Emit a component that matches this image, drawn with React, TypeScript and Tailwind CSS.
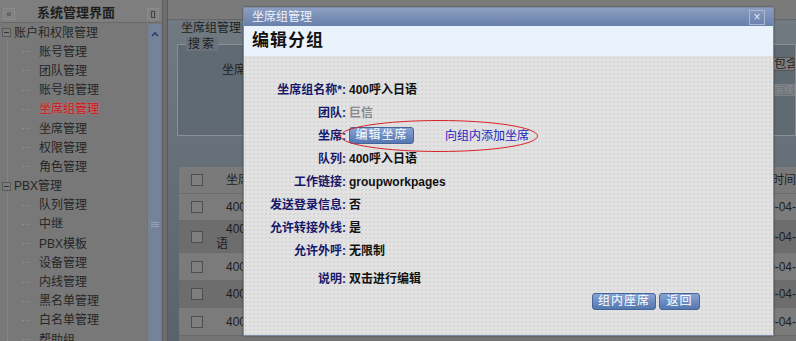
import React from 'react';

const font = "font-['Liberation_Sans','Noto_Sans_CJK_SC',sans-serif]";

type TreeItem = { label: string; top?: boolean; active?: boolean };

const tree: TreeItem[] = [
  { label: '账户和权限管理', top: true },
  { label: '账号管理' },
  { label: '团队管理' },
  { label: '账号组管理' },
  { label: '坐席组管理', active: true },
  { label: '坐席管理' },
  { label: '权限管理' },
  { label: '角色管理' },
  { label: 'PBX管理', top: true },
  { label: '队列管理' },
  { label: '中继' },
  { label: 'PBX模板' },
  { label: '设备管理' },
  { label: '内线管理' },
  { label: '黑名单管理' },
  { label: '白名单管理' },
  { label: '帮助组' },
];

const formRows: { label: string; value?: string; muted?: boolean; seat?: boolean }[] = [
  { label: '坐席组名称*:', value: '400呼入日语' },
  { label: '团队:', value: '巨信', muted: true },
  { label: '坐席:', seat: true },
  { label: '队列:', value: '400呼入日语' },
  { label: '工作链接:', value: 'groupworkpages' },
  { label: '发送登录信息:', value: '否' },
  { label: '允许转接外线:', value: '是' },
  { label: '允许外呼:', value: '无限制' },
];

function Sidebar() {
  return (
    <div className="w-[163px] shrink-0 bg-[#787878] border-r border-[#5e5e5e] flex flex-col">
      {/* header */}
      <div className="h-[23px] shrink-0 flex items-end pb-[2px] px-[3px] bg-[#7e7e7e] border-b border-[#6a6a6a]">
        <div className="w-[12px] h-[12px] border border-[#8c8c8c] bg-[#828282] text-[9px] leading-[10px] text-[#3a3a3a] text-center">«</div>
        <div className="flex-1 text-center text-[13px] font-bold text-[#1e1e1e] leading-[14px] pr-[10px]">系统管理界面</div>
        <div className="w-[12px] h-[12px] border border-[#8c8c8c] bg-[#828282] flex items-center justify-center">
          <div className="w-[4px] h-[7px] border border-[#444]" />
        </div>
      </div>
      <div className="flex-1 flex min-h-0">
        {/* tree */}
        <div className="flex-1 relative">
          <div className="absolute left-[7px] top-[10px] bottom-0 border-l border-dotted border-[#8e8e8e]" />
          {tree.map((t) => (
            <div key={t.label} className="h-[19.2px] flex items-center relative">
              {t.top ? (
                <>
                  <div className="w-[9px] h-[9px] ml-[2px] border border-[#5a5a5a] bg-[#7c7c7c] flex items-center justify-center relative z-10">
                    <div className="w-[5px] h-px bg-[#333]" />
                  </div>
                  <span className="ml-[3px] text-[12px] text-[#262626] whitespace-nowrap">{t.label}</span>
                </>
              ) : (
                <>
                  <div className="ml-[22px] w-[8px] border-t border-dotted border-[#8e8e8e]" />
                  <span
                    className={`ml-[9px] text-[12px] whitespace-nowrap ${
                      t.active ? 'text-[#c8141c] [text-shadow:0_0_2px_#e08080]' : 'text-[#262626]'
                    }`}
                  >
                    {t.label}
                  </span>
                </>
              )}
            </div>
          ))}
        </div>
        {/* scrollbar */}
        <div className="w-[14px] shrink-0 mr-[1px] mt-[1px] bg-[#76819a] border-l border-[#6c7487] flex flex-col items-center">
          <svg width="10" height="10" viewBox="0 0 10 10" className="mt-[5px]">
            <path d="M2 7 L5 4 L8 7" stroke="#2b3e6e" strokeWidth="1.6" fill="none" />
          </svg>
          <div className="mt-[183px] flex flex-col gap-[1px]">
            <div className="w-[8px] h-px bg-[#9aa3b6]" />
            <div className="w-[8px] h-px bg-[#9aa3b6]" />
            <div className="w-[8px] h-px bg-[#9aa3b6]" />
          </div>
        </div>
      </div>
    </div>
  );
}

function Checkbox() {
  return <div className="w-[12px] h-[12px] border border-[#4e4e4e] bg-[#7e7e7e]" />;
}

function Main() {
  const rows = [
    { bg: 'bg-[#7b7b7b]', h: 'h-[27px]', two: false },
    { bg: 'bg-[#6d6d6d]', h: 'h-[32px]', two: true },
    { bg: 'bg-[#7b7b7b]', h: 'h-[28px]', two: false },
    { bg: 'bg-[#6d6d6d]', h: 'h-[27px]', two: false },
    { bg: 'bg-[#7b7b7b]', h: 'h-[28px]', two: false },
  ];
  return (
    <div className="flex-1 ml-[4px] border-l border-[#5a5a5a] bg-gradient-to-b from-[#737b82] to-[#58636c] flex flex-col">
      <div className="h-[20px] shrink-0 bg-[#7a7a7a] border-b border-[#666]" />
      <div className="h-[16px] flex items-center pl-[13px] text-[12px] text-[#1e1e1e]">坐席组管理</div>
      {/* search fieldset */}
      <div className="ml-[9px] mt-[8px] h-[92px] border border-[#8a9096] relative bg-[#5f6a73]">
        <span className="absolute -top-[8px] left-[8px] px-[2px] bg-[#6a737b] text-[12px] leading-[14px] text-[#1e1e1e] tracking-[2px]">搜索</span>
        <div className="pl-[44px] pt-[16px] text-[12px] text-[#1e1e1e]">坐席</div>
        <div className="absolute right-[0px] top-[12px] flex flex-col items-end gap-[13px]">
          <div className="w-[22px] h-[14px] bg-[#7e7e7e] border border-[#555] text-[12px] leading-[12px] text-[#1e1e1e] overflow-hidden whitespace-nowrap">包含</div>
          <div className="w-[22px] h-[12px] bg-[#6f7479] border border-[#7c8186] text-[10px] leading-[10px] text-[#8c9095] overflow-hidden whitespace-nowrap">层级</div>
        </div>
      </div>
      {/* table */}
      <div className="ml-[11px] mt-[31px] flex-1 bg-[#747474]">
        <div className="h-[27px] flex items-center bg-[#7a7a7a] border-b border-[#6a6a6a] text-[12px] text-[#1e1e1e]">
          <div className="w-[35px] flex justify-center"><Checkbox /></div>
          <span className="ml-[12px]">坐席</span>
          <span className="ml-auto">时间</span>
        </div>
        {rows.map((r, i) => (
          <div key={i} className={`${r.h} ${r.bg} flex items-center border-b border-[#6a6a6a] text-[12px] text-[#1e1e1e]`}>
            <div className="w-[35px] flex justify-center"><Checkbox /></div>
            {r.two ? (
              <div className="flex flex-col leading-[15px] ml-[2px]">
                <span className="ml-[10px]">400</span>
                <span>语</span>
              </div>
            ) : (
              <span className="ml-[12px]">400</span>
            )}
            <span className="ml-auto">0-04-</span>
          </div>
        ))}
      </div>
    </div>
  );
}

function BlueButton({ children, w }: { children: React.ReactNode; w: string }) {
  return (
    <div
      className={`${w} h-[17px] rounded-[3px] border border-[#46659a] bg-gradient-to-b from-[#86a3d2] to-[#5577b0] text-[12px] leading-[15px] text-white text-center tracking-[1px]`}
    >
      {children}
    </div>
  );
}

function Modal() {
  return (
    <div className="absolute left-[243px] top-[7px] w-[531px] h-[329px] flex flex-col border border-[#7c8aa6] shadow-[0_0_2px_rgba(0,0,0,0.4)]">
      <div className="h-[18px] shrink-0 bg-gradient-to-b from-[#8c9ec2] to-[#6980ab] flex items-center pl-[8px] pr-[8px]">
        <span className="text-[12px] text-[#eef2fa]">坐席组管理</span>
        <div className="ml-auto w-[16px] h-[15px] border border-[#aab8d4] flex items-center justify-center text-[#dfe6f3] text-[12px] leading-none">×</div>
      </div>
      <div className="h-[30px] shrink-0 bg-[#eaf3fc] flex items-center pl-[8px]">
        <span className="text-[17px] font-bold text-[#111] tracking-[1px]">编辑分组</span>
      </div>
      <div className="flex-1 relative bg-[#e2e2e2] bg-[image:radial-gradient(#d6d6d6_0.8px,transparent_0.9px)] bg-[length:4px_4px] pt-[22px]">
        {formRows.map((r) => (
          <div key={r.label} className="h-[23px] flex items-center text-[12px]">
            <div className="w-[102px] text-right font-bold text-[#18186a] whitespace-nowrap">{r.label}</div>
            <div className="ml-[3px] flex items-center">
              {r.seat ? (
                <>
                  <BlueButton w="w-[65px]">编辑坐席</BlueButton>
                  <span className="ml-[31px] text-[#1f1fc4]">向组内添加坐席</span>
                </>
              ) : (
                <span className={`font-bold ${r.muted ? 'text-[#8a8a8a]' : 'text-[#111]'}`}>{r.value}</span>
              )}
            </div>
          </div>
        ))}
        <div className="h-[23px] mt-[5px] flex items-center text-[12px]">
          <div className="w-[102px] text-right font-bold text-[#18186a]">说明:</div>
          <span className="ml-[3px] font-bold text-[#111]">双击进行编辑</span>
        </div>
        <div className="mt-[3px] flex justify-end gap-[3px] pr-[73px]">
          <BlueButton w="w-[64px]">组内座席</BlueButton>
          <BlueButton w="w-[41px]">返回</BlueButton>
        </div>
        {/* red annotation ellipse */}
        <svg className="absolute left-[95px] top-[63px]" width="200" height="34" viewBox="0 0 200 34">
          <ellipse cx="100" cy="17" rx="98.5" ry="15.5" fill="none" stroke="#d8232a" strokeWidth="1" />
        </svg>
      </div>
    </div>
  );
}

export default function App() {
  return (
    <div className={`${font} w-[796px] h-[341px] relative overflow-hidden bg-[#6e6e6e] flex`}>
      <Sidebar />
      <Main />
      <Modal />
    </div>
  );
}
